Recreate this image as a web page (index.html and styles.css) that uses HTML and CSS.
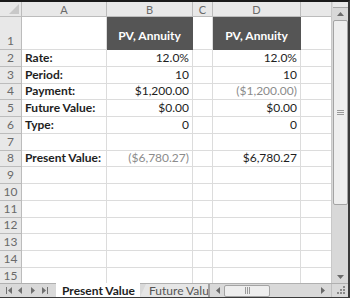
FILE: index.html
```html
<!DOCTYPE html>
<html lang="en">
<head>
    <meta charset="UTF-8">
    <title>Present Value</title>
    <link rel="stylesheet" href="styles.css">
</head>
<body>
    <div class="window">
        <div class="main">
            <div class="sheet">
                <div class="corner"><span class="corner-tri"></span></div>
                <div class="col-head">A</div>
                <div class="col-head">B</div>
                <div class="col-head">C</div>
                <div class="col-head">D</div>
                <div class="col-head"></div>

                <div class="row-head tall">1</div>
                <div class="cell tall"></div>
                <div class="cell tall title">PV, Annuity</div>
                <div class="cell tall"></div>
                <div class="cell tall title">PV, Annuity</div>
                <div class="cell tall"></div>

                <div class="row-head">2</div>
                <div class="cell label">Rate:</div>
                <div class="cell num">12.0%</div>
                <div class="cell"></div>
                <div class="cell num">12.0%</div>
                <div class="cell"></div>

                <div class="row-head">3</div>
                <div class="cell label">Period:</div>
                <div class="cell num">10</div>
                <div class="cell"></div>
                <div class="cell num">10</div>
                <div class="cell"></div>

                <div class="row-head">4</div>
                <div class="cell label">Payment:</div>
                <div class="cell num">$1,200.00</div>
                <div class="cell"></div>
                <div class="cell num neg">($1,200.00)</div>
                <div class="cell"></div>

                <div class="row-head">5</div>
                <div class="cell label">Future Value:</div>
                <div class="cell num">$0.00</div>
                <div class="cell"></div>
                <div class="cell num">$0.00</div>
                <div class="cell"></div>

                <div class="row-head">6</div>
                <div class="cell label">Type:</div>
                <div class="cell num">0</div>
                <div class="cell"></div>
                <div class="cell num">0</div>
                <div class="cell"></div>

                <div class="row-head">7</div>
                <div class="cell"></div>
                <div class="cell"></div>
                <div class="cell"></div>
                <div class="cell"></div>
                <div class="cell"></div>

                <div class="row-head">8</div>
                <div class="cell label">Present Value:</div>
                <div class="cell num neg">($6,780.27)</div>
                <div class="cell"></div>
                <div class="cell num">$6,780.27</div>
                <div class="cell"></div>

                <div class="row-head">9</div>
                <div class="cell"></div><div class="cell"></div><div class="cell"></div><div class="cell"></div><div class="cell"></div>
                <div class="row-head">10</div>
                <div class="cell"></div><div class="cell"></div><div class="cell"></div><div class="cell"></div><div class="cell"></div>
                <div class="row-head">11</div>
                <div class="cell"></div><div class="cell"></div><div class="cell"></div><div class="cell"></div><div class="cell"></div>
                <div class="row-head">12</div>
                <div class="cell"></div><div class="cell"></div><div class="cell"></div><div class="cell"></div><div class="cell"></div>
                <div class="row-head">13</div>
                <div class="cell"></div><div class="cell"></div><div class="cell"></div><div class="cell"></div><div class="cell"></div>
                <div class="row-head">14</div>
                <div class="cell"></div><div class="cell"></div><div class="cell"></div><div class="cell"></div><div class="cell"></div>
                <div class="row-head">15</div>
                <div class="cell"></div><div class="cell"></div><div class="cell"></div><div class="cell"></div><div class="cell"></div>
            </div>

            <div class="vscroll">
                <div class="split-box"></div>
                <div class="arrow-btn">
                    <svg width="7" height="4" viewBox="0 0 7 4"><path d="M0 4 L3.5 0 L7 4 Z" fill="#6a6a6a"/></svg>
                </div>
                <div class="vthumb">
                    <svg width="7" height="5" viewBox="0 0 7 5"><path d="M0 0.5 H7 M0 2.5 H7 M0 4.5 H7" stroke="#9a9a9a" stroke-width="1"/></svg>
                </div>
                <div class="vtrack"></div>
                <div class="arrow-btn">
                    <svg width="7" height="4" viewBox="0 0 7 4"><path d="M0 0 L3.5 4 L7 0 Z" fill="#6a6a6a"/></svg>
                </div>
            </div>
        </div>

        <div class="bottom">
            <div class="tab-nav">
                <svg width="48" height="7" viewBox="0 0 48 7">
                    <g fill="#707070">
                        <rect x="2" y="0" width="1" height="7"/><path d="M8 0 L4 3.5 L8 7 Z"/>
                        <path d="M18 0 L14 3.5 L18 7 Z"/>
                        <path d="M27 0 L31 3.5 L27 7 Z"/>
                        <path d="M38 0 L42 3.5 L38 7 Z"/><rect x="43" y="0" width="1" height="7"/>
                    </g>
                </svg>
            </div>
            <div class="tab active">Present Value</div>
            <div class="tab other">Future Valu</div>
            <div class="hscroll">
                <span class="h-arrow">
                    <svg width="4" height="7" viewBox="0 0 4 7"><path d="M4 0 L0 3.5 L4 7 Z" fill="#6a6a6a"/></svg>
                </span>
                <span class="hthumb">
                    <svg width="5" height="7" viewBox="0 0 5 7"><path d="M0.5 0 V7 M2.5 0 V7 M4.5 0 V7" stroke="#9a9a9a" stroke-width="1"/></svg>
                </span>
                <span class="htrack"></span>
                <span class="h-arrow">
                    <svg width="4" height="7" viewBox="0 0 4 7"><path d="M0 0 L4 3.5 L0 7 Z" fill="#6a6a6a"/></svg>
                </span>
            </div>
            <div class="grip">
                <svg width="12" height="12" viewBox="0 0 12 12">
                    <g fill="#8a8a8a">
                        <rect x="9" y="1" width="2" height="2"/>
                        <rect x="6" y="4" width="2" height="2"/><rect x="9" y="4" width="2" height="2"/>
                        <rect x="3" y="7" width="2" height="2"/><rect x="6" y="7" width="2" height="2"/><rect x="9" y="7" width="2" height="2"/>
                    </g>
                </svg>
            </div>
        </div>
    </div>
</body>
</html>
```

FILE: styles.css
```css
* {
    box-sizing: border-box;
    margin: 0;
    padding: 0;
}

body {
    width: 350px;
    height: 298px;
    overflow: hidden;
    background-color: #ffffff;
    font-family: Lato, "Liberation Sans", sans-serif;
    font-size: 12px;
    color: #1e1e1e;
}

.window {
    width: 350px;
    height: 298px;
    border-top: 2px solid #1a1a1a;
    border-right: 2px solid #3a3a3a;
    border-bottom: 1px solid #3a3a3a;
    display: flex;
    flex-direction: column;
}

.main {
    flex: 1;
    display: flex;
    overflow: hidden;
}

.sheet {
    flex: 1;
    display: grid;
    grid-template-columns: 22px 85px 86px 20px 88px 70px;
    grid-template-rows: 15px 33px repeat(14, 16.75px);
    overflow: hidden;
}

.corner,
.col-head,
.row-head {
    background-color: #e8e8e8;
    color: #6a6a6a;
    border-right: 1px solid #bcbcbc;
    border-bottom: 1px solid #bcbcbc;
}

.corner {
    position: relative;
}

.corner-tri {
    position: absolute;
    right: 2px;
    bottom: 2px;
    width: 0;
    height: 0;
    border-left: 10px solid transparent;
    border-bottom: 10px solid #c8c8c8;
}

.col-head {
    display: flex;
    align-items: center;
    justify-content: center;
    font-size: 11px;
    line-height: 1;
}

.row-head {
    display: flex;
    align-items: flex-end;
    justify-content: center;
    font-size: 12px;
    line-height: 16px;
}

.cell {
    border-right: 1px solid #dcdcdc;
    border-bottom: 1px solid #dcdcdc;
    display: flex;
    align-items: flex-end;
    padding: 0 3px;
    line-height: 16px;
    white-space: nowrap;
    overflow: hidden;
}

.label {
    font-weight: bold;
}

.num {
    justify-content: flex-end;
}

.neg {
    color: #8c8c8c;
}

.title {
    background-color: #555555;
    color: #ffffff;
    font-weight: bold;
    justify-content: center;
    align-items: center;
    padding-top: 6px;
    border-color: #555555;
}

.vscroll {
    width: 17px;
    background-color: #d8d8d8;
    border-left: 1px solid #c8c8c8;
    display: flex;
    flex-direction: column;
    align-items: center;
}

.split-box {
    width: 15px;
    height: 6px;
    background-color: #e8e8e8;
    border-bottom: 1px solid #a8a8a8;
}

.arrow-btn {
    width: 15px;
    height: 12px;
    display: flex;
    align-items: center;
    justify-content: center;
}

.vthumb {
    width: 15px;
    height: 185px;
    background-color: #eeeeee;
    border: 1px solid #a4a4a4;
    border-radius: 2px;
    display: flex;
    align-items: center;
    justify-content: center;
}

.vtrack {
    flex: 1;
}

.bottom {
    height: 14px;
    display: flex;
    background-color: #d9d9d9;
    border-top: 1px solid #b0b0b0;
    font-size: 12px;
}

.tab-nav {
    width: 56px;
    display: flex;
    align-items: center;
    justify-content: center;
}

.tab {
    display: flex;
    align-items: center;
    line-height: 13px;
    white-space: nowrap;
}

.active {
    width: 84px;
    padding: 0 6px;
    background-color: #ffffff;
    font-weight: bold;
    color: #1e1e1e;
    margin-top: -1px;
}

.other {
    width: 68px;
    padding-left: 9px;
    background-color: #e6e6e6;
    color: #555555;
    clip-path: polygon(6px 0, 100% 0, 100% 100%, 0 100%);
}

.hscroll {
    flex: 1;
    display: flex;
    align-items: center;
    border-left: 2px solid #a0a0a0;
    padding: 0 2px;
}

.h-arrow {
    width: 12px;
    display: flex;
    justify-content: center;
}

.hthumb {
    width: 46px;
    height: 12px;
    background-color: #eeeeee;
    border: 1px solid #a4a4a4;
    border-radius: 2px;
    display: flex;
    align-items: center;
    justify-content: center;
}

.htrack {
    flex: 1;
}

.grip {
    width: 17px;
    display: flex;
    align-items: center;
    justify-content: center;
    background-color: #d9d9d9;
    border-left: 1px solid #c0c0c0;
}
```
